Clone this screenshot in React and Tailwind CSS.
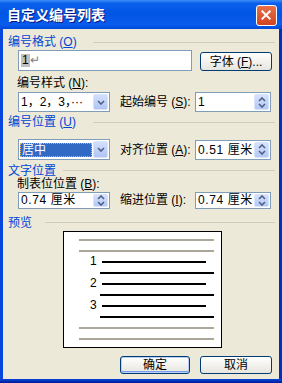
import React from "react";

// Windows XP style "自定义编号列表" dialog.

const Chevron = ({ dir = "down" }) => (
  <svg width="8" height="5" viewBox="0 0 8 5">
    <path
      d={dir === "down" ? "M1 1 L4 4 L7 1" : "M1 4 L4 1 L7 4"}
      fill="none"
      stroke="#4D6185"
      strokeWidth="1.6"
    />
  </svg>
);

const SpinButton = () => (
  <div className="m-[1px] w-[15px] self-stretch flex flex-col items-center justify-center gap-[1px] rounded-[2px] border border-[#D8E4FC] bg-linear-to-b from-[#D6E2FC] to-[#B4C8F6]">
    <Chevron dir="up" />
    <Chevron dir="down" />
  </div>
);

const DropButton = () => (
  <div className="m-[1px] w-[15px] self-stretch flex items-center justify-center rounded-[2px] border border-[#D8E4FC] bg-linear-to-b from-[#D3E0FC] to-[#B0C4F5]">
    <Chevron dir="down" />
  </div>
);

const SpinBox = ({ value, className }) => (
  <div className={`flex border border-[#7F9DB9] bg-white ${className}`}>
    <div className="flex-1 pl-[2px] flex items-center whitespace-nowrap tracking-[0.6px]">{value}</div>
    <SpinButton />
  </div>
);

const Header = ({ children, w, className = "" }) => (
  <div className={`flex items-center text-[#0046D5] ${className}`}>
    <span className={`shrink-0 whitespace-nowrap ${w}`}>{children}</span>
    <div className="flex-1 h-px bg-[#CFCDBF]" />
  </div>
);

const XpButton = ({ children, primary, className = "" }) => (
  <button
    className={`h-[18px] flex items-center justify-center rounded-[3px] border border-[#003C74] bg-linear-to-b from-white to-[#E6E5DE] text-black ${
      primary ? "shadow-[inset_0_0_0_1px_#B8D0F8,inset_0_-1px_0_1px_#7E9EEC]" : ""
    } ${className}`}
  >
    {children}
  </button>
);

const Gray = () => (
  <div className="h-[11px]">
    <div className="mt-[5px] ml-[15px] w-[135px] h-[2px] bg-[#ACA899]" />
  </div>
);

const Numbered = ({ n }) => (
  <>
    <div className="h-[11px] flex items-start">
      <span className="ml-[26px] w-[8px] leading-[11px] text-[12px]">{n}</span>
      <div className="mt-[5px] ml-[4px] w-[104px] h-[2px] bg-black" />
    </div>
    <div className="h-[11px]">
      <div className="mt-[5px] ml-[36px] w-[114px] h-[2px] bg-black" />
    </div>
  </>
);

export default function App() {
  return (
    <div className="w-[282px] h-[383px] flex flex-col bg-linear-to-r from-[#0845DC] via-[#0B55EC] to-[#0030B8] font-['Liberation_Sans','Noto_Sans_CJK_SC',sans-serif] text-[12px] text-black select-none">
      {/* title bar */}
      <div className="h-[29px] shrink-0 flex items-center justify-between pl-[7px] pr-[5px] pt-[1px] bg-[linear-gradient(180deg,#3C8CF8_0%,#0A5FEA_12%,#0055E5_45%,#0A5CEC_85%,#0048D8_100%)]">
        <span className="text-white font-bold text-[14px] leading-none [text-shadow:1px_1px_0_#0A1883]">
          自定义编号列表
        </span>
        <div className="w-[21px] h-[21px] rounded-[3px] border border-white bg-linear-to-b from-[#E8704A] to-[#D0431F] flex items-center justify-center">
          <svg width="21" height="21" viewBox="0 0 21 21">
            <path d="M6 6 L14 14 M14 6 L6 14" stroke="white" strokeWidth="2.2" strokeLinecap="square" />
          </svg>
        </div>
      </div>

      {/* body */}
      <div className="mx-[3px] flex-1 bg-[#ECE9D8] flex flex-col pl-[5px] pr-[4px]">
        <Header w="w-[85px]" className="mt-[6px] h-[14px]">
          编号格式 (<span className="underline">O</span>)
        </Header>

        <div className="mt-[1px] pl-[10px] flex items-start">
          <div className="w-[174px] h-[21px] border border-[#7F9DB9] bg-white flex items-center pl-[2px]">
            <span className="bg-[#C0C0C0] leading-[13px] px-px">1</span>
            <span className="text-[#808080] leading-[13px]">↵</span>
          </div>
          <XpButton className="ml-[8px] mt-[2px] w-[72px] h-[19px]">
            字体 (<span className="underline">F</span>)...
          </XpButton>
        </div>

        <div className="mt-[5px] h-[14px] pl-[9px] leading-[14px]">
          编号样式 (<span className="underline">N</span>):
        </div>

        <div className="mt-[2px] pl-[10px] flex items-center">
          <div className="w-[92px] h-[20px] flex border border-[#7F9DB9] bg-white">
            <div className="flex-1 pl-[2px] flex items-center whitespace-nowrap">1，2，3，···</div>
            <DropButton />
          </div>
          <span className="ml-[10px] w-[75px] whitespace-nowrap">
            起始编号 (<span className="underline">S</span>):
          </span>
          <SpinBox value="1" className="w-[76px] h-[20px]" />
        </div>

        <Header w="w-[85px]" className="mt-[3px] h-[14px]">
          编号位置 (<span className="underline">U</span>)
        </Header>

        <div className="mt-[10px] pl-[10px] flex items-center">
          <div className="w-[92px] h-[21px] flex border border-[#7F9DB9] bg-white">
            <div className="flex-1 flex items-center pl-px">
              <div className="w-full h-[14px] bg-[#316AC5] border border-dotted border-[#E8B048] text-white flex items-center pl-px leading-none">
                居中
              </div>
            </div>
            <DropButton />
          </div>
          <span className="ml-[10px] w-[75px] whitespace-nowrap">
            对齐位置 (<span className="underline">A</span>):
          </span>
          <SpinBox value="0.51 厘米" className="w-[76px] h-[20px]" />
        </div>

        <Header w="w-[55px]" className="mt-[4px] h-[13px]">
          文字位置
        </Header>

        <div className="mt-[1px] h-[13px] pl-[9px] leading-[13px]">
          制表位位置 (<span className="underline">B</span>):
        </div>

        <div className="pl-[10px] flex items-center">
          <SpinBox value="0.74 厘米" className="w-[92px] h-[17px]" />
          <span className="ml-[10px] w-[75px] whitespace-nowrap">
            缩进位置 (<span className="underline">I</span>):
          </span>
          <SpinBox value="0.74 厘米" className="w-[76px] h-[17px]" />
        </div>

        <Header w="w-[37px]" className="mt-[7px] h-[13px]">
          预览
        </Header>

        {/* preview */}
        <div className="mt-[2px] ml-[55px] w-[159px] h-[117px] border border-black bg-white pt-[2px] flex flex-col font-['Liberation_Sans',sans-serif]">
          <Gray />
          <Gray />
          <Numbered n="1" />
          <Numbered n="2" />
          <Numbered n="3" />
          <Gray />
          <Gray />
        </div>

        <div className="mt-[8px] flex pl-[112px]">
          <XpButton primary className="w-[70px]">确定</XpButton>
          <XpButton className="ml-[10px] w-[72px]">取消</XpButton>
        </div>
      </div>

      {/* bottom frame */}
      <div className="h-[4px] shrink-0 bg-linear-to-b from-[#0845DC] to-[#001A98]" />
    </div>
  );
}
